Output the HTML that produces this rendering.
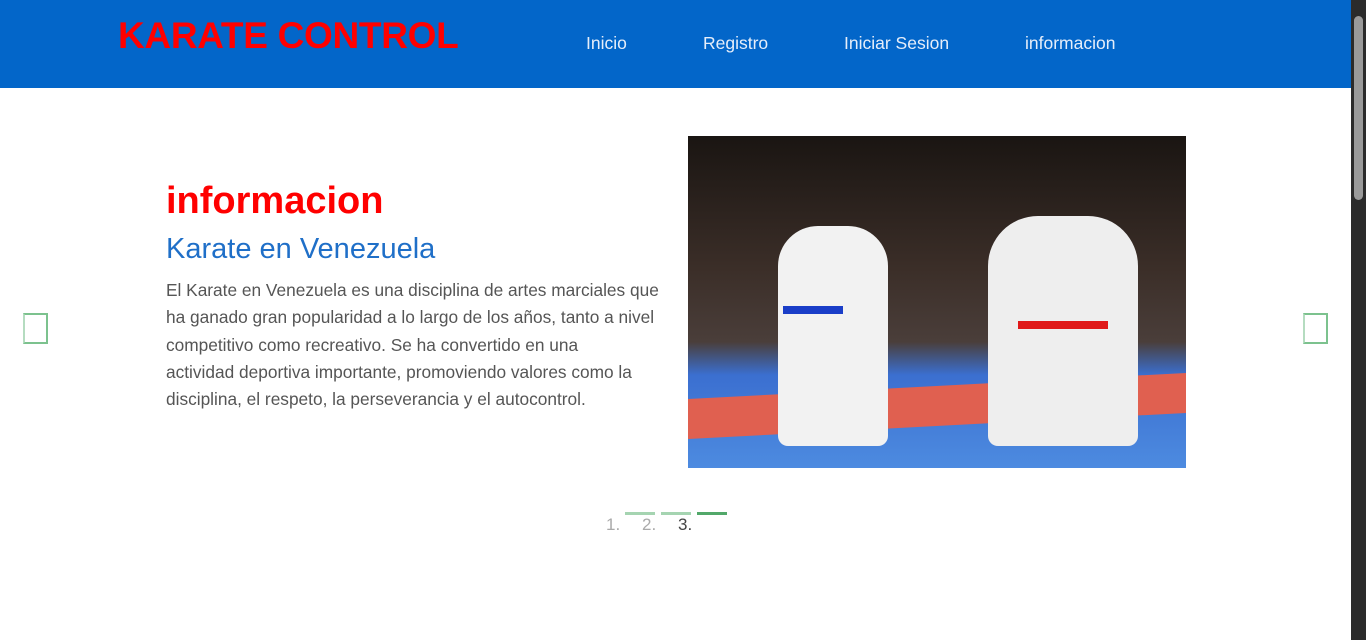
<!DOCTYPE html>
<html><head><meta charset="utf-8"><style>
*{margin:0;padding:0;box-sizing:border-box}
body{width:1366px;height:640px;overflow:hidden;background:#fff;font-family:"Liberation Sans",sans-serif;position:relative}
.hdr{position:absolute;left:0;top:0;width:1351px;height:88px;background:#0366c9}
.logo{position:absolute;left:118px;top:15px;color:#ff0000;font-size:37px;font-weight:bold;letter-spacing:-0.3px}
.nav a{position:absolute;top:33px;color:#e6eefa;font-size:17.5px;text-decoration:none}
.sb{position:absolute;left:1351px;top:0;width:15px;height:640px;background:#2b2b2b}
.th{position:absolute;left:1354px;top:16px;width:9px;height:184px;background:#9a9a9a;border-radius:5px}
h1{position:absolute;left:166px;top:180px;color:#f00;font-size:38px;font-weight:bold}
h2{position:absolute;left:166px;top:233px;color:#1f6fc8;font-size:29px;font-weight:normal}
p{position:absolute;left:166px;top:277px;white-space:nowrap;color:#555;font-size:17.3px;line-height:27.3px}
.img{position:absolute;left:688px;top:136px;width:498px;height:332px;background:linear-gradient(#1a1512 0%,#3b2e28 40%,#4a3e3a 62%,#3b6fd0 72%,#4d8be0 100%);overflow:hidden}
.arr{position:absolute;width:25px;height:31px;border:2px solid #7cc28e;border-left-color:#b5dcc0}
.pg{position:absolute;top:515px;font-size:17px;color:#aaa}
.bar{position:absolute;top:512px;width:30px;height:3px;background:#a5d4b1}
</style></head><body>
<div class="hdr"><div class="logo">KARATE CONTROL</div>
<div class="nav"><a style="left:586px">Inicio</a><a style="left:703px">Registro</a><a style="left:844px">Iniciar Sesion</a><a style="left:1025px">informacion</a></div></div>
<h1>informacion</h1>
<h2>Karate en Venezuela</h2>
<p>El Karate en Venezuela es una disciplina de artes marciales que<br>ha ganado gran popularidad a lo largo de los años, tanto a nivel<br>competitivo como recreativo. Se ha convertido en una<br>actividad deportiva importante, promoviendo valores como la<br>disciplina, el respeto, la perseverancia y el autocontrol.</p>
<div class="img">
<div style="position:absolute;left:0;top:250px;width:498px;height:40px;background:#e06050;transform:skewY(-3deg)"></div>
<div style="position:absolute;left:90px;top:90px;width:110px;height:220px;background:#f2f2f2;border-radius:40px 40px 10px 10px"></div>
<div style="position:absolute;left:300px;top:80px;width:150px;height:230px;background:#eeeeee;border-radius:50px 50px 10px 10px"></div>
<div style="position:absolute;left:330px;top:185px;width:90px;height:8px;background:#e01818"></div>
<div style="position:absolute;left:95px;top:170px;width:60px;height:8px;background:#1a3ec8"></div>
</div>
<div class="arr" style="left:23px;top:313px"></div>
<div class="arr" style="left:1303px;top:313px"></div>
<span class="pg" style="left:606px">1.</span><span class="pg" style="left:642px">2.</span><span class="pg" style="left:678px;color:#444">3.</span>
<div class="bar" style="left:625px"></div><div class="bar" style="left:661px"></div><div class="bar" style="left:697px;background:#52a86a"></div>
<div class="sb"></div><div class="th"></div>
</body></html>
